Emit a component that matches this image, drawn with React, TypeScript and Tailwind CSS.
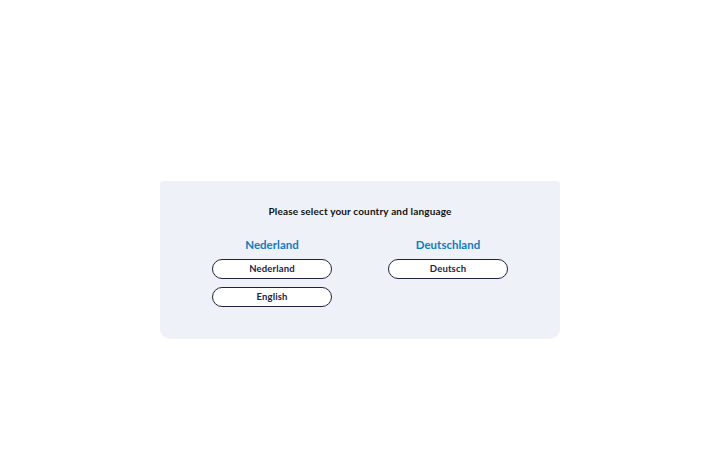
const COUNTRIES = [
  { name: "Nederland", languages: ["Nederland", "English"] },
  { name: "Deutschland", languages: ["Deutsch"] },
];

export default function App() {
  return (
    <div
      className="flex h-[450px] w-[720px] items-start justify-center bg-white pt-[181px]"
      style={{ fontFamily: 'Lato, "Noto Sans", sans-serif' }}
    >
      <div className="flex h-[158px] w-[400px] flex-col items-center rounded-t-[3px] rounded-b-[10px] bg-[#eef1f8] pt-[23px]">
        <h1 className="text-[10px] font-bold leading-[14px] tracking-[0.15px] text-[#111]">
          Please select your country and language
        </h1>
        <div className="mt-[19px] flex">
          {COUNTRIES.map((c) => (
            <div key={c.name} className="flex w-[176px] flex-col items-center">
              <h2 className="text-[11.5px] font-bold leading-[16px] text-[#137bbf]">{c.name}</h2>
              <div className="mt-[6px] flex flex-col gap-[8px]">
                {c.languages.map((l) => (
                  <button
                    key={l}
                    className="h-[20px] w-[120px] rounded-full border-[1.5px] border-[#1d2244] bg-white text-[9.5px] font-bold leading-none tracking-[0.15px] text-[#1d2244]"
                  >
                    {l}
                  </button>
                ))}
              </div>
            </div>
          ))}
        </div>
      </div>
    </div>
  );
}
